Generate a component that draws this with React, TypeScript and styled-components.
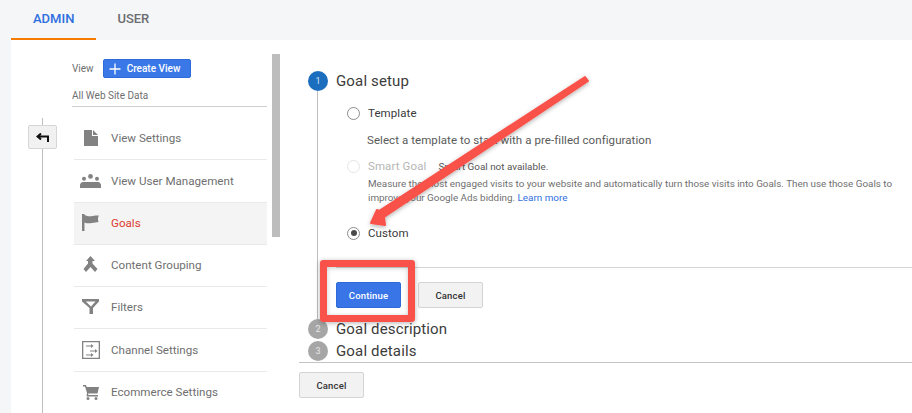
import React from "react";
import styled, { createGlobalStyle } from "styled-components";

const Global = createGlobalStyle`
  html, body { margin: 0; padding: 0; background: #f5f6f8; }
  * { box-sizing: border-box; }
  body { font-family: Roboto, "Liberation Sans", sans-serif; }
`;

const Page = styled.div`
  position: relative;
  width: 912px;
  height: 413px;
  overflow: hidden;
  background: #f5f6f8;
`;
const TabBar = styled.div`
  display: flex;
  height: 40px;
  padding-left: 11px;
`;
const Tab = styled.div<{ $active?: boolean }>`
  height: 40px;
  padding: 10px 22px 0 ${(p) => (p.$active ? 22 : 21)}px;
  font-size: 13px;
  font-weight: 500;
  line-height: 18px;
  color: ${(p) => (p.$active ? "#2f6fdf" : "#6b6d70")};
  border-bottom: 2px solid ${(p) => (p.$active ? "#f57c00" : "transparent")};
`;
const Panel = styled.div`
  display: flex;
  height: 373px;
  margin-left: 11px;
  background: #fff;
`;
const Rail = styled.div`
  position: relative;
  flex: 0 0 61px;
  padding: 85px 0 0 17px;
  &::before {
    content: "";
    position: absolute;
    left: 31px;
    top: 78px;
    bottom: 0;
    width: 1px;
    background: #bdbdbd;
  }
`;
const BackButton = styled.div`
  position: relative;
  display: flex;
  align-items: center;
  justify-content: center;
  width: 29px;
  height: 24px;
  background: #f1f1f1;
  border: 1px solid #d6d6d6;
  border-radius: 2px;
`;
const SideColumn = styled.div`
  flex: 0 0 195px;
  padding-top: 19px;
`;
const ViewRow = styled.div`
  display: flex;
  align-items: center;
  height: 19px;
  gap: 9px;
  font-size: 10px;
  color: #6f6f6f;
`;
const CreateButton = styled.div`
  display: flex;
  align-items: center;
  gap: 6px;
  width: 88px;
  height: 19px;
  padding-left: 5px;
  background: #3b78e7;
  border: 1px solid #2f6bd8;
  border-radius: 2px;
  color: #fff;
  font-size: 10px;
  font-weight: 500;
`;
const ViewName = styled.div`
  height: 29px;
  padding-top: 12px;
  font-size: 10px;
  line-height: 12px;
  color: #6f6f6f;
  border-bottom: 1px solid #cfcfcf;
`;
const Menu = styled.div`
  margin: 11px 0 0 2px;
`;
const MenuItem = styled.div<{ $active?: boolean; $h: number }>`
  display: flex;
  align-items: center;
  height: ${(p) => p.$h}px;
  padding-bottom: ${(p) => (p.$h > 42 ? 1 : 2)}px;
  border-bottom: 1px solid #e9e9e9;
  background: ${(p) => (p.$active ? "#f4f4f4" : "transparent")};
  font-size: 11.6px;
  color: ${(p) => (p.$active ? "#dd3b30" : "#6f6f6f")};
  &:last-child { border-bottom: none; }
`;
const IconSlot = styled.div`
  display: flex;
  justify-content: center;
  align-items: center;
  flex: 0 0 33px;
  margin-right: 4px;
  color: #828282;
`;
const Scrollbar = styled.div`
  flex: 0 0 8px;
  height: 183px;
  margin: 14px 19px 0 5px;
  background: #bdbdbd;
`;
const Main = styled.div`
  flex: 1;
  padding-top: 31px;
  min-width: 0;
`;
const StepHeader = styled.div<{ $mt?: number }>`
  display: flex;
  align-items: center;
  gap: 8px;
  height: 20px;
  margin-top: ${(p) => p.$mt ?? 0}px;
  padding-left: 9px;
`;
const StepCircle = styled.div<{ $active?: boolean }>`
  display: flex;
  align-items: center;
  justify-content: center;
  flex: 0 0 20px;
  width: 20px;
  height: 20px;
  border-radius: 50%;
  background: ${(p) => (p.$active ? "#1b6ebd" : "#a6a6a6")};
  color: ${(p) => (p.$active ? "#cfe2f5" : "#e6e6e6")};
  font-size: 9px;
`;
const StepTitle = styled.div`
  font-size: 15px;
  color: #3c3c3c;
  letter-spacing: 0.15px;
`;
const StepBody = styled.div`
  margin-left: 18px;
  padding-top: 12px;
  height: 228px;
  border-left: 1px solid #bdbdbd;
`;
const Options = styled.div`
  padding-left: 29px;
  height: 164px;
`;
const OptionRow = styled.div<{ $mt?: number }>`
  display: flex;
  align-items: center;
  height: 20px;
  margin-top: ${(p) => p.$mt ?? 0}px;
`;
const Radio = styled.div<{ $disabled?: boolean; $checked?: boolean }>`
  position: relative;
  flex: 0 0 13px;
  width: 13px;
  height: 13px;
  margin-right: 8px;
  border-radius: 50%;
  border: 1px solid ${(p) => (p.$disabled ? "#e5e5e5" : "#8c8c8c")};
  background: #fff;
  &::after {
    content: "";
    display: ${(p) => (p.$checked ? "block" : "none")};
    position: absolute;
    left: 2.5px;
    top: 2.5px;
    width: 6px;
    height: 6px;
    border-radius: 50%;
    background: #4a4a4a;
  }
`;
const OptionLabel = styled.div<{ $disabled?: boolean }>`
  font-size: 11.5px;
  color: ${(p) => (p.$disabled ? "#b5b5b5" : "#3a3a3a")};
  letter-spacing: 0.1px;
`;
const NotAvailable = styled.div`
  margin-left: 12px;
  font-size: 9.9px;
  color: #555;
`;
const Hint = styled.div`
  margin: 8px 0 0 20px;
  height: 18px;
  font-size: 11.5px;
  line-height: 18px;
  color: #5a5a5a;
  letter-spacing: 0.07px;
`;
const Description = styled.div`
  margin: 1px 0 0 21px;
  font-size: 9.85px;
  line-height: 14px;
  color: #6f6f6f;
  white-space: nowrap;
`;
const LearnMore = styled.span`
  color: #2f6fdf;
`;
const Divider = styled.div`
  height: 1px;
  margin-left: 18px;
  background: #d4d4d4;
`;
const Actions = styled.div`
  display: flex;
  gap: 17px;
  padding: 14px 0 0 18px;
`;
const Button = styled.div<{ $primary?: boolean }>`
  display: flex;
  align-items: center;
  justify-content: center;
  width: 65px;
  height: 26px;
  border-radius: 2px;
  font-size: 9.5px;
  font-weight: 500;
  letter-spacing: 0.15px;
  background: ${(p) => (p.$primary ? "#3a75e8" : "#f2f2f2")};
  color: ${(p) => (p.$primary ? "#fff" : "#333")};
  border: 1px solid ${(p) => (p.$primary ? "#2f6bd8" : "#d4d4d4")};
`;
const FooterRule = styled.div`
  height: 1px;
  margin-top: 1px;
  background: #c4c4c4;
`;
const Footer = styled.div`
  padding-top: 9px;
`;
const Overlay = styled.svg`
  position: absolute;
  left: 0;
  top: 0;
  pointer-events: none;
`;
const Highlight = styled.div`
  position: absolute;
  left: 320px;
  top: 260px;
  width: 95px;
  height: 62px;
  border: 7px solid #f9524a;
  border-radius: 3px;
  box-shadow: 0 1px 5px rgba(0, 0, 0, 0.3), inset 0 1px 5px rgba(0, 0, 0, 0.22);
`;

const Ico: React.FC<{ d: string; w: number; h: number }> = ({ d, w, h }) => (
  <svg width={w} height={h} viewBox={`0 0 ${w} ${h}`} fill="currentColor" aria-hidden="true">
    <path d={d} />
  </svg>
);

const items: { label: string; h: number; active?: boolean; icon: React.ReactNode }[] = [
  { label: "View Settings", h: 42, icon: <Ico w={14} h={16} d="M0 0h8v6h6v10H0zM9 0l5 5H9z" /> },
  {
    label: "View User Management",
    h: 43,
    icon: (
      <Ico
        w={21}
        h={14}
        d="M0 14v-3c0-1.500 1.500-3 3-3h15c1.500 0 3 1.500 3 3v3zM4 2.800a2 2 0 1 1 0 4 2 2 0 0 1 0-4zM10.500 0a2.400 2.400 0 1 1 0 4.800 2.400 2.400 0 0 1 0-4.800zM17 2.800a2 2 0 1 1 0 4 2 2 0 0 1 0-4z"
      />
    ),
  },
  {
    label: "Goals",
    h: 42,
    active: true,
    icon: <Ico w={17} h={17} d="M0 0h2.500v1c3 1.500 5.500 1.500 8 1 2-.4 4-.5 6.500-.5-1 1.800-1.500 3.500-.5 6.500-2 .5-4 .5-6.500 1-2.500.5-5 .5-7.500-.5V17H0z" />,
  },
  { label: "Content Grouping", h: 42, icon: <Ico w={15} h={17} d="M7.500 0l4.500 5H9.500v2.500l5 5.500L12 16l-4.500-5-4.500 5L.5 13l4.500-5.500V5H3z" /> },
  { label: "Filters", h: 42, icon: <Ico w={17} h={15} d="M0 0h17v2.500L11 9v6H7.500V9L0 2.500zM3.800 2.500 9 7.500 13.500 2.500z" /> },
  {
    label: "Channel Settings",
    h: 43,
    icon: (
      <Ico
        w={18}
        h={18}
        d="M0 0h18v18H0zM1.300 1.300v15.400h15.400V1.300zM4 4.500h5V3l2.500 2L9 7V5.500H4zM8 9.500h5V8l2.500 2-2.500 2v-1.500H8zM4 13.500h5V12l2.500 2L9 16v-1.500H4z"
      />
    ),
  },
  {
    label: "Ecommerce Settings",
    h: 42,
    icon: <Ico w={16} h={15} d="M0 0h3l.7 2H16l-1.500 6.500H5L5.500 10H15v1.500H3.500L4 8 2 1.500H0zM5 12a1.500 1.500 0 1 1 0 3 1.500 1.500 0 0 1 0-3zM13 12a1.500 1.500 0 1 1 0 3 1.500 1.500 0 0 1 0-3z" />,
  },
];

export default function App() {
  return (
    <Page>
      <Global />
      <TabBar>
        <Tab $active>ADMIN</Tab>
        <Tab>USER</Tab>
      </TabBar>
      <Panel>
        <Rail>
          <BackButton>
            <svg width="13" height="9" viewBox="0 0 13 9" fill="none" stroke="#111" strokeWidth="2" aria-hidden="true">
              <path d="M5 .5 1.500 3.500 5 6.500M1.500 3.500H12V9" />
            </svg>
          </BackButton>
        </Rail>
        <SideColumn>
          <ViewRow>
            View
            <CreateButton>
              <svg width="12" height="12" viewBox="0 0 12 12" stroke="#fff" strokeWidth="1.300" aria-hidden="true">
                <path d="M6 .5v11M.5 6h11" />
              </svg>
              Create View
            </CreateButton>
          </ViewRow>
          <ViewName>All Web Site Data</ViewName>
          <Menu>
            {items.map((it) => (
              <MenuItem key={it.label} $active={it.active} $h={it.h}>
                <IconSlot>{it.icon}</IconSlot>
                {it.label}
              </MenuItem>
            ))}
          </Menu>
        </SideColumn>
        <Scrollbar />
        <Main>
          <StepHeader>
            <StepCircle $active>1</StepCircle>
            <StepTitle>Goal setup</StepTitle>
          </StepHeader>
          <StepBody>
            <Options>
              <OptionRow>
                <Radio />
                <OptionLabel>Template</OptionLabel>
              </OptionRow>
              <Hint>Select a template to start with a pre-filled configuration</Hint>
              <OptionRow $mt={7}>
                <Radio $disabled />
                <OptionLabel $disabled>Smart Goal</OptionLabel>
                <NotAvailable>Smart Goal not available.</NotAvailable>
              </OptionRow>
              <Description>
                Measure the most engaged visits to your website and automatically turn those visits into Goals. Then use those Goals to
                <br />
                improve your Google Ads bidding. <LearnMore>Learn more</LearnMore>
              </Description>
              <OptionRow $mt={18}>
                <Radio $checked />
                <OptionLabel>Custom</OptionLabel>
              </OptionRow>
            </Options>
            <Divider />
            <Actions>
              <Button $primary>Continue</Button>
              <Button>Cancel</Button>
            </Actions>
          </StepBody>
          <StepHeader>
            <StepCircle>2</StepCircle>
            <StepTitle>Goal description</StepTitle>
          </StepHeader>
          <StepHeader $mt={2}>
            <StepCircle>3</StepCircle>
            <StepTitle>Goal details</StepTitle>
          </StepHeader>
          <FooterRule />
          <Footer>
            <Button>Cancel</Button>
          </Footer>
        </Main>
      </Panel>
      <Highlight />
      <Overlay width="912" height="413" viewBox="0 0 912 413">
        <defs>
          <filter id="arrowShadow" x="-10%" y="-10%" width="120%" height="120%">
            <feDropShadow dx="0" dy="1.500" stdDeviation="2" floodColor="#000" floodOpacity="0.3" />
          </filter>
        </defs>
        <path
          d="M585 77 588 81 384 217 385 225 371 223 377 210 379 211z"
          fill="#f9524a"
          stroke="#f9524a"
          strokeWidth="2"
          strokeLinejoin="round"
          filter="url(#arrowShadow)"
        />
      </Overlay>
    </Page>
  );
}
